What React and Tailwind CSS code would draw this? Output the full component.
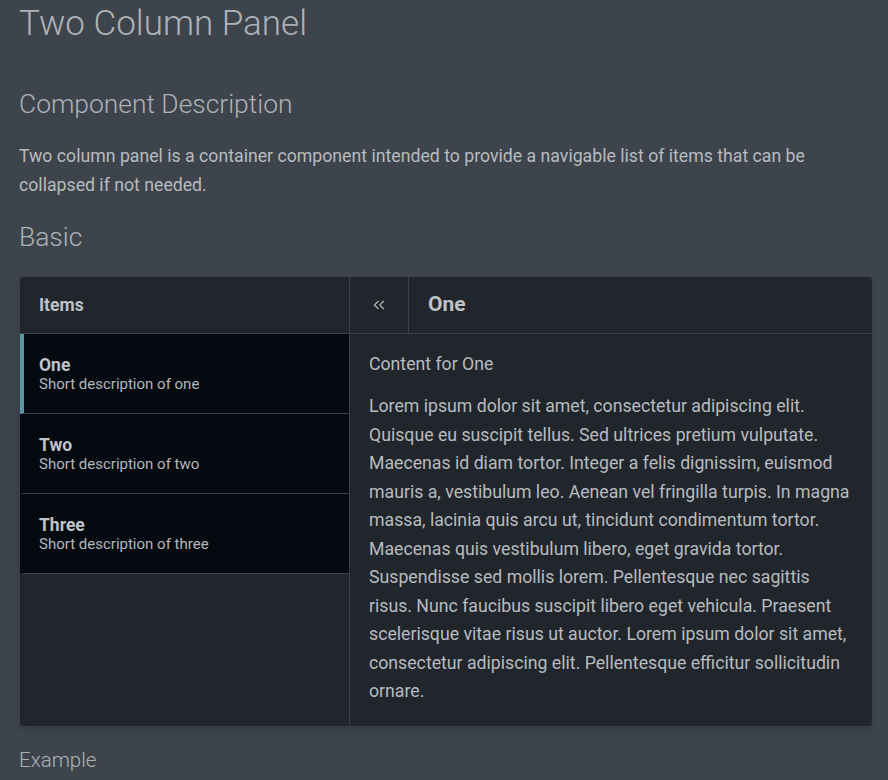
import { ChevronsLeft } from "lucide-react";

const items = [
  { title: "One", description: "Short description of one" },
  { title: "Two", description: "Short description of two" },
  { title: "Three", description: "Short description of three" },
];

const lorem =
  "Lorem ipsum dolor sit amet, consectetur adipiscing elit. Quisque eu suscipit tellus. Sed ultrices pretium vulputate. Maecenas id diam tortor. Integer a felis dignissim, euismod mauris a, vestibulum leo. Aenean vel fringilla turpis. In magna massa, lacinia quis arcu ut, tincidunt condimentum tortor. Maecenas quis vestibulum libero, eget gravida tortor. Suspendisse sed mollis lorem. Pellentesque nec sagittis risus. Nunc faucibus suscipit libero eget vehicula. Praesent scelerisque vitae risus ut auctor. Lorem ipsum dolor sit amet, consectetur adipiscing elit. Pellentesque efficitur sollicitudin ornare.";

function TwoColumnPanel() {
  const active = "One";

  return (
    <div className="flex rounded border border-[#3a4149] bg-[#21262d] shadow-md">
      {/* Item list */}
      <div className="w-[330px] shrink-0 border-r border-[#3a4149]">
        <div className="flex h-[57px] items-center border-b border-[#3a4149] px-[19px] text-[17.5px] font-bold text-[#bfc3c7]">
          Items
        </div>
        {items.map((item) => (
          <div
            key={item.title}
            className={`flex h-[80px] flex-col justify-center border-b border-l-4 border-b-[#3a4149] bg-[#050a10] pl-[15px] pr-5 ${
              item.title === active ? "border-l-[#5a96a6]" : "border-l-transparent"
            }`}
          >
            <span className="text-[17.5px] font-bold leading-[20px] text-[#bfc3c7]">
              {item.title}
            </span>
            <span className="text-[15px] leading-[18px] text-[#b3b7bb]">
              {item.description}
            </span>
          </div>
        ))}
      </div>

      {/* Detail */}
      <div className="flex-1">
        <div className="flex h-[57px] border-b border-[#3a4149]">
          <button className="flex w-[59px] items-center justify-center border-r border-[#3a4149] text-[#b3b7bb]">
            <ChevronsLeft size={18} strokeWidth={1.5} />
          </button>
          <h3 className="flex items-center pl-[19px] text-[21px] font-bold text-[#bfc3c7]">
            One
          </h3>
        </div>
        <div className="pb-5 pl-[19px] pr-5 pt-5 text-[17.7px] text-[#b8bbbf]">
          <p className="mb-[18px] leading-[20px]">Content for One</p>
          <p className="leading-[28.5px]">{lorem}</p>
        </div>
      </div>
    </div>
  );
}

export default function App() {
  return (
    <div className="min-h-screen bg-[#3d444c] pl-[19px] pr-[15px] font-['Roboto','Liberation_Sans',sans-serif] text-[#b8bbbf]">
      <h1 className="text-[35px] font-light leading-[48px] text-[#aeb2b6]">
        Two Column Panel
      </h1>

      <h2 className="mt-[38px] text-[26.4px] font-light leading-[36px] text-[#aeb2b6]">
        Component Description
      </h2>
      <p className="mt-[20px] text-[17.7px] leading-[29px]">
        Two column panel is a container component intended to provide a navigable list of items that can be
        collapsed if not needed.
      </p>

      <h2 className="mt-[19px] text-[26.4px] font-light leading-[36px] text-[#aeb2b6]">
        Basic
      </h2>
      <div className="mt-[21px]">
        <TwoColumnPanel />
      </div>

      <h3 className="mt-[19px] text-[20.5px] font-light leading-[28px] text-[#aeb2b6]">
        Example
      </h3>
    </div>
  );
}
